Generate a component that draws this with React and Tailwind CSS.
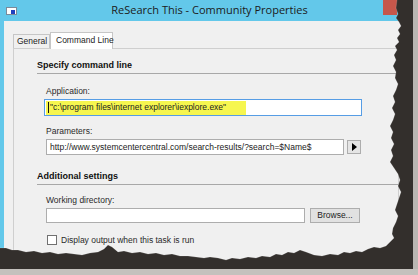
import React from 'react';

const ui = { fontFamily: '"Liberation Sans", "DejaVu Sans", sans-serif' };

// rough torn-paper edge along the right and bottom of the screenshot
const edge = [
  [397, 0], [396, 8], [398, 14], [396, 18], [399, 22], [401, 26], [398, 30], [400, 34], [397, 38], [399, 42],
  [395, 46], [397, 50], [394, 55], [396, 60], [393, 66], [396, 72], [395, 78], [398, 84], [396, 90], [393, 96],
  [395, 102], [392, 108], [395, 114], [393, 120], [390, 126], [393, 132], [391, 138], [394, 144], [391, 150],
  [393, 156], [390, 162], [394, 168], [398, 174], [400, 180], [398, 186], [401, 192], [399, 198], [397, 204],
  [395, 210], [398, 216], [396, 222], [393, 228], [392, 234], [394, 238], [390, 242], [386, 246], [380, 248],
  [374, 247], [368, 249], [362, 252], [356, 251], [350, 253], [344, 252], [338, 255], [330, 254], [322, 256],
  [314, 255], [306, 252], [300, 250], [294, 253], [288, 252], [282, 255], [276, 254], [270, 257], [262, 256],
  [256, 258], [248, 257], [240, 259], [232, 258], [226, 260], [218, 258], [210, 257], [204, 258], [196, 257],
  [188, 256], [180, 256], [172, 254], [164, 255], [156, 253], [148, 254], [140, 252], [132, 253], [124, 251],
  [118, 252], [112, 247], [108, 245], [104, 249], [98, 252], [90, 253], [82, 255], [74, 254], [66, 253],
  [58, 254], [50, 252], [42, 253], [34, 251], [26, 252], [18, 250], [12, 250], [6, 248], [0, 248],
];

function TornEdge() {
  const line = 'M' + edge.map(p => p.join(',')).join(' L');
  return (
    <svg className="absolute inset-0 pointer-events-none" width="418" height="275" viewBox="0 0 418 275">
      <path d={line + ' L0,275 L418,275 L418,0 Z'} fill="#332f2c" />
      <path d={line} fill="none" stroke="#ffffff" strokeOpacity="0.25" strokeWidth="0.6" />
      <rect x="413" y="0" width="5" height="275" fill="#b9b6b2" />
      <rect x="0" y="269" width="418" height="6" fill="#c4c1bd" />
    </svg>
  );
}

function Label({ children, className = '' }) {
  return <div className={`text-[8.5px] leading-[10px] text-[#2a2a2a] whitespace-nowrap ${className}`}>{children}</div>;
}

function Section({ title, className = '' }) {
  return (
    <div className={`ml-[23px] border-b border-[#a8a8a8] pb-[2px] ${className}`}>
      <div className="text-[9px] leading-[11px] font-bold text-[#111]">{title}</div>
    </div>
  );
}

export default function App() {
  return (
    <div className="relative w-[418px] h-[275px] overflow-hidden bg-[#f0f0f0]" style={ui}>
      {/* title bar */}
      <div className="h-[21px] bg-[#63c8ea] flex items-center relative">
        <div className="ml-[6px] w-[11px] h-[8px] bg-white border border-[#7a8a9a] relative">
          <div className="absolute left-[4px] top-[2px] w-[4px] h-[4px] bg-[#1f3fbf]" />
        </div>
        <div className="flex-1 text-center text-[11px] text-[#1b1b1b] pr-[16px]" style={{ fontFamily: '"Open Sans", "Noto Sans", sans-serif' }}>
          ReSearch This - Community Properties
        </div>
        <div className="absolute right-[21px] top-0 w-[14px] h-[15px] bg-[#c7574b]" />
      </div>

      <div className="flex h-[254px]">
        <div className="w-[4px] bg-[#63c8ea]" />
        <div className="flex-1 pl-[9px] pt-[10px] flex flex-col">
          {/* tabs */}
          <div className="flex items-end h-[17px]">
            <div className="h-[14px] w-[37px] border border-b-0 border-[#c6c6c6] bg-[#f0f0f0] text-[8.5px] leading-[13px] text-[#222] pl-[3px] whitespace-nowrap">General</div>
            <div className="h-[17px] w-[63px] border border-b-0 border-[#c6c6c6] bg-white text-[8.5px] leading-[15px] text-[#222] pl-[5px] relative z-10 -mb-px whitespace-nowrap">Command Line</div>
          </div>
          {/* tab page */}
          <div className="flex-1 border border-[#cfcfcf] w-[386px] bg-[#f0f0f0] pt-[11px]">
            <Section title="Specify command line" />

            <Label className="ml-[32px] mt-[12px]">Application:</Label>
            <div className="ml-[30px] mt-[3px] w-[318px] h-[17px] border border-[#569de5] bg-white flex items-center px-[1px]">
              <div className="h-[14px] w-[200px] bg-[#f6f64f] flex items-center text-[8.5px] text-[#222] pl-[2px] whitespace-nowrap">
                <span className="w-px h-[11px] bg-[#111] mr-[1px]" />
                "c:\program files\internet explorer\iexplore.exe"
              </div>
            </div>

            <Label className="ml-[32px] mt-[10px]">Parameters:</Label>
            <div className="ml-[32px] mt-[3px] flex items-center">
              <div className="w-[298px] h-[16px] border border-[#adadad] bg-white text-[8.5px] leading-[14px] text-[#222] pl-[3px] whitespace-nowrap overflow-hidden">
                http://www.systemcentercentral.com/search-results/?search=$Name$
              </div>
              <div className="ml-[3px] w-[14px] h-[14px] border border-[#adadad] bg-[#e5e5e5] flex items-center justify-center">
                <div className="w-0 h-0 border-y-[4px] border-y-transparent border-l-[5px] border-l-black ml-[1px]" />
              </div>
            </div>

            <Section title="Additional settings" className="mt-[16px]" />

            <Label className="ml-[32px] mt-[10px]">Working directory:</Label>
            <div className="ml-[32px] mt-[3px] flex items-center">
              <div className="w-[259px] h-[15px] border border-[#adadad] bg-white" />
              <div className="ml-[5px] w-[50px] h-[15px] border border-[#adadad] bg-[#e1e1e1] text-[8.5px] leading-[13px] text-[#222] text-center">Browse...</div>
            </div>

            <div className="ml-[33px] mt-[12px] flex items-center">
              <div className="w-[10px] h-[10px] border border-[#707070] bg-white" />
              <Label className="ml-[4px]">Display output when this task is run</Label>
            </div>
          </div>
        </div>
      </div>

      <TornEdge />
    </div>
  );
}
